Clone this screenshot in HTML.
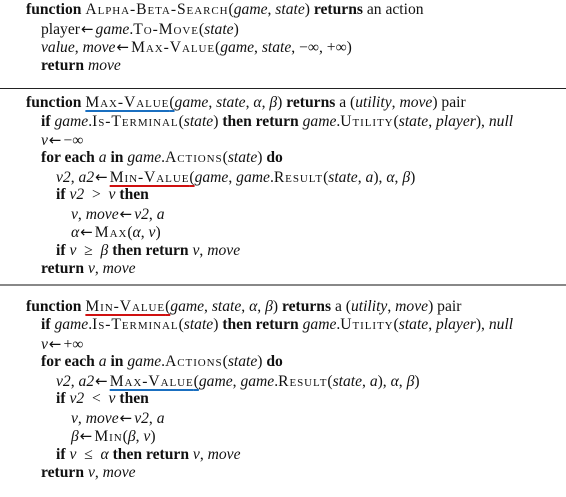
<!DOCTYPE html>
<html><head><meta charset="utf-8"><style>
body{margin:0;width:566px;height:497px;background:#fff;position:relative;overflow:hidden;font-family:"Liberation Serif",serif;font-size:15.6px;color:#111}
.l{position:absolute;white-space:nowrap;line-height:18px;height:18px}
b{font-weight:bold}
i{font-style:italic}
.sc{font-variant:small-caps;letter-spacing:0.06em}
.a{font-family:"DejaVu Sans",sans-serif;font-size:15px;margin:0 2px 0 1px}
.rule{position:absolute;left:0;width:566px;height:1px}
.ub{text-decoration:underline;text-decoration-color:#1a6fc0;text-decoration-thickness:2px;text-underline-offset:3px}
.ur{text-decoration:underline;text-decoration-color:#d01010;text-decoration-thickness:2px;text-underline-offset:3px}
</style></head><body>
<div class="l" style="left:26px;top:1px"><b>function</b> <span class="sc">Alpha-Beta-Search</span>(<i>game</i>, <i>state</i>) <b>returns</b> an action</div>
<div class="l" style="left:41px;top:20px">player<span class="a">←</span><i>game</i>.<span class="sc">To-Move</span>(<i>state</i>)</div>
<div class="l" style="left:41px;top:38px"><i>value</i>, <i>move</i><span class="a">←</span><span class="sc">Max-Value</span>(<i>game</i>, <i>state</i>, −∞, +∞)</div>
<div class="l" style="left:41px;top:57px"><b>return</b> <i>move</i></div>
<div class="rule" style="top:88px;background:#222"></div>

<div class="l" style="left:26px;top:94px"><b>function</b> <span class="ub"><span class="sc">Max-Value</span>(</span><i>game</i>, <i>state</i>, <i>α</i>, <i>β</i>) <b>returns</b> a (<i>utility</i>, <i>move</i>) pair</div>
<div class="l" style="left:41px;top:113px"><b>if</b> <i>game</i>.<span class="sc">Is-Terminal</span>(<i>state</i>) <b>then return</b> <i>game</i>.<span class="sc">Utility</span>(<i>state</i>, <i>player</i>), <i>null</i></div>
<div class="l" style="left:41px;top:131px"><i>v</i><span class="a">←</span>−∞</div>
<div class="l" style="left:41px;top:149px"><b>for each</b> <i>a</i> <b>in</b> <i>game</i>.<span class="sc">Actions</span>(<i>state</i>) <b>do</b></div>
<div class="l" style="left:56px;top:168px"><i>v2</i>, <i>a2</i><span class="a">←</span><span class="ur"><span class="sc">Min-Value</span>(</span><i>game</i>, <i>game</i>.<span class="sc">Result</span>(<i>state</i>, <i>a</i>), <i>α</i>, <i>β</i>)</div>
<div class="l" style="left:56px;top:186px"><b>if</b> <i>v2</i> &nbsp;&gt;&nbsp; <i>v</i> <b>then</b></div>
<div class="l" style="left:71px;top:205px"><i>v</i>, <i>move</i><span class="a">←</span><i>v2</i>, <i>a</i></div>
<div class="l" style="left:71px;top:223px"><i>α</i><span class="a">←</span><span class="sc">Max</span>(<i>α</i>, <i>v</i>)</div>
<div class="l" style="left:56px;top:242px"><b>if</b> <i>v</i> &nbsp;≥&nbsp; <i>β</i> <b>then return</b> <i>v</i>, <i>move</i></div>
<div class="l" style="left:41px;top:260px"><b>return</b> <i>v</i>, <i>move</i></div>
<div class="rule" style="top:284px;height:2px;background:#888"></div>

<div class="l" style="left:26px;top:298px"><b>function</b> <span class="ur"><span class="sc">Min-Value</span>(</span><i>game</i>, <i>state</i>, <i>α</i>, <i>β</i>) <b>returns</b> a (<i>utility</i>, <i>move</i>) pair</div>
<div class="l" style="left:41px;top:316px"><b>if</b> <i>game</i>.<span class="sc">Is-Terminal</span>(<i>state</i>) <b>then return</b> <i>game</i>.<span class="sc">Utility</span>(<i>state</i>, <i>player</i>), <i>null</i></div>
<div class="l" style="left:41px;top:335px"><i>v</i><span class="a">←</span>+∞</div>
<div class="l" style="left:41px;top:353px"><b>for each</b> <i>a</i> <b>in</b> <i>game</i>.<span class="sc">Actions</span>(<i>state</i>) <b>do</b></div>
<div class="l" style="left:56px;top:372px"><i>v2</i>, <i>a2</i><span class="a">←</span><span class="ub"><span class="sc">Max-Value</span>(</span><i>game</i>, <i>game</i>.<span class="sc">Result</span>(<i>state</i>, <i>a</i>), <i>α</i>, <i>β</i>)</div>
<div class="l" style="left:56px;top:390px"><b>if</b> <i>v2</i> &nbsp;&lt;&nbsp; <i>v</i> <b>then</b></div>
<div class="l" style="left:71px;top:409px"><i>v</i>, <i>move</i><span class="a">←</span><i>v2</i>, <i>a</i></div>
<div class="l" style="left:71px;top:427px"><i>β</i><span class="a">←</span><span class="sc">Min</span>(<i>β</i>, <i>v</i>)</div>
<div class="l" style="left:56px;top:446px"><b>if</b> <i>v</i> &nbsp;≤&nbsp; <i>α</i> <b>then return</b> <i>v</i>, <i>move</i></div>
<div class="l" style="left:41px;top:464px"><b>return</b> <i>v</i>, <i>move</i></div>
</body></html>
